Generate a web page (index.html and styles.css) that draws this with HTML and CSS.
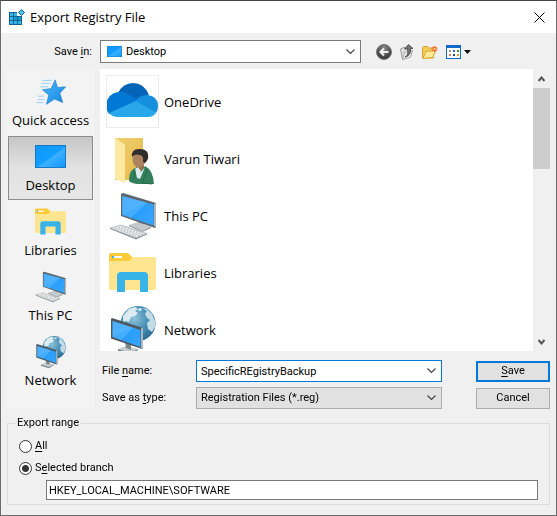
FILE: index.html
```html
<!DOCTYPE html>
<html lang="en">
<head>
    <meta charset="UTF-8">
    <meta name="viewport" content="width=device-width, initial-scale=1.0">
    <title>Export Registry File</title>
    <link rel="stylesheet" href="styles.css">
</head>
<body>
    <svg class="sprites" aria-hidden="true">
        <defs>
            <linearGradient id="screen" x1="0" y1="0" x2="1" y2="1">
                <stop offset="0" stop-color="#3aa5fb"/>
                <stop offset="0.5" stop-color="#45aeff"/>
                <stop offset="0.52" stop-color="#2b9dfb"/>
                <stop offset="1" stop-color="#37a6ff"/>
            </linearGradient>
            <linearGradient id="desk" x1="0" y1="0" x2="1" y2="1">
                <stop offset="0" stop-color="#0d98fb"/>
                <stop offset="0.5" stop-color="#129dff"/>
                <stop offset="0.56" stop-color="#3bb0ff"/>
                <stop offset="1" stop-color="#1199f8"/>
            </linearGradient>
            <radialGradient id="globe" cx="0.4" cy="0.35" r="0.7">
                <stop offset="0" stop-color="#8fc3da"/>
                <stop offset="0.5" stop-color="#4d93b8"/>
                <stop offset="1" stop-color="#276a94"/>
            </radialGradient>
            <linearGradient id="star" x1="0" y1="0" x2="1" y2="1">
                <stop offset="0" stop-color="#4fb9fb"/>
                <stop offset="1" stop-color="#1186e0"/>
            </linearGradient>
            <linearGradient id="flap" x1="0" y1="0" x2="1" y2="1">
                <stop offset="0" stop-color="#f0d070"/>
                <stop offset="1" stop-color="#e5b94c"/>
            </linearGradient>
            <radialGradient id="ball" cx="0.5" cy="0.25" r="0.8">
                <stop offset="0" stop-color="#8b8b8b"/>
                <stop offset="0.6" stop-color="#4d4d4d"/>
                <stop offset="1" stop-color="#2f2f2f"/>
            </radialGradient>
            <pattern id="keys" width="3" height="2" patternUnits="userSpaceOnUse" patternTransform="rotate(18)">
                <rect width="3" height="2" fill="#e3e6e8"/>
                <rect width="1" height="1" fill="#a3a9ad"/>
            </pattern>
        </defs>
        <symbol id="icon-pc" viewBox="0 0 53 53">
            <path d="M32 31v5l5 2 1-6z" fill="#7e868b"/>
            <path d="M23 36l9-3 13 5-9 4z" fill="#c3c9cd"/>
            <path d="M23 36l13 6 9-4v1l-9 4-13-6z" fill="#7d868c"/>
            <path d="M15 5l2-1 33 10v24l-1 1-34-12z" fill="#5c666d"/>
            <path d="M16.300 7l31.400 8.500v21L16.300 26z" fill="url(#screen)"/>
            <path d="M48 15l2-1v24l-2-1z" fill="#aeb8be"/>
            <path d="M16.300 26V7L40 13.500z" fill="#6cc0ff" opacity=".35"/>
            <path d="M4 39l11-3 26 8.500-11 4.500z" fill="url(#keys)" stroke="#b4babd" stroke-width=".8"/>
            <path d="M4 39l26 10 11-4.500v1L30 50.500 4 40z" fill="#8e969b"/>
        </symbol>
        <symbol id="icon-libraries" viewBox="0 0 53 53">
            <path d="M3 9q0-2 2-2h17l5 5v4H3z" fill="#fdcb3a"/>
            <path d="M3 15h20l4-4h21q2 0 2 2v29q0 2-2 2H5q-2 0-2-2z" fill="#ffe590"/>
            <rect x="6" y="10" width="10" height="2" fill="#fff"/>
            <rect x="6" y="10" width="2" height="2" fill="#36b2ea"/>
            <path d="M11 46V30q0-4 4-4h23q4 0 4 4v16h-8V34H19v12z" fill="#38b3e8"/>
        </symbol>
        <symbol id="icon-network" viewBox="0 0 53 53">
            <circle cx="32" cy="20.500" r="17.500" fill="url(#globe)"/>
            <path d="M17 13l6-7 6-2 3 2-3 2 3 2-3 3-4 1-2 5-3-1-3 1z" fill="#dcebf0"/>
            <path d="M36 5l5 1 5 5 3 7v6l-3 5-4-3-1-6 3-3-3-2-2-4 2-3z" fill="#c2dde7"/>
            <path d="M32 6l3-1 1 2-3 1z" fill="#e8f3f6"/>
            <path d="M12 46l8-3 12 3-8 5z" fill="#c6ccd0"/>
            <path d="M12 46l12 4 8-4v1l-8 5-12-4z" fill="#78838a"/>
            <path d="M19 39l6 2v6l-5-2z" fill="#7c868c"/>
            <path d="M5 16l1-1 31 10v20l-1 1L5 35.500z" fill="#4c5961"/>
            <path d="M6.500 18L34.500 27v17L6.500 34z" fill="url(#screen)"/>
            <path d="M35 25l2 0v20l-2 1z" fill="#a8b7c0"/>
            <path d="M6.500 34V18l20 6.500z" fill="#6cc0ff" opacity=".35"/>
        </symbol>
        <symbol id="icon-desktop" viewBox="0 0 31 23" preserveAspectRatio="none">
            <rect width="31" height="23" fill="#1679c4"/>
            <rect x="1" y="1" width="29" height="21" fill="url(#desk)"/>
        </symbol>
        <symbol id="icon-chevron" viewBox="0 0 9 6">
            <path d="M.5 .5l4 4 4-4" fill="none" stroke="#444" stroke-width="1.200"/>
        </symbol>
    </svg>

    <div class="dialog">
        <header class="titlebar">
            <svg class="app-icon" viewBox="0 0 16 16" aria-hidden="true">
                <path d="M0 3h8v4h5v9H0z" fill="#14628f"/>
                <path d="M1 4h3v3H1zM5 4h3v3H5zM1 8h3v3H1zM5 8h3v3H5zM9 8h3v3H9zM1 12h3v3H1zM5 12h3v3H5zM9 12h3v3H9z" fill="#35b6ea"/>
                <path d="M5 8h3v3H5zM9 8h3v3H9z" fill="#1797d8"/>
                <path d="M12.500 .5l3 3-3 3-3-3z" fill="#54c4ee" stroke="#14628f"/>
            </svg>
            <h1>Export Registry File</h1>
            <button class="close" type="button" aria-label="Close">
                <svg viewBox="0 0 11 11" width="11" height="11"><path d="M.5 .5l10 10M10.500 .5l-10 10" stroke="#000" fill="none"/></svg>
            </button>
        </header>

        <form class="dialog-body">
            <div class="lookin">
                <label for="saveIn">Save <u>i</u>n:</label>
                <div class="combo lookin-combo">
                    <svg class="combo-icon" aria-hidden="true"><use href="#icon-desktop"/></svg>
                    <select id="saveIn">
                        <option>Desktop</option>
                    </select>
                </div>
                <div class="toolbar">
                    <button type="button" aria-label="Back">
                        <svg viewBox="0 0 16 16" width="16" height="16">
                            <circle cx="8" cy="8" r="7.500" fill="url(#ball)" stroke="#777"/>
                            <path d="M12.500 8H4.500M8 4.500L4.500 8 8 11.500" fill="none" stroke="#f2f2f2" stroke-width="2"/>
                        </svg>
                    </button>
                    <button type="button" aria-label="Up one level">
                        <svg viewBox="0 0 16 16" width="16" height="16">
                            <path d="M1.500 5l4-2 1 1.500 5-1.500v9l-8 3.500z" fill="#dedede" stroke="#979797"/>
                            <path d="M3.500 15.500l2-7 8-2-2 6.500z" fill="#efefef" stroke="#a5a5a5"/>
                            <path d="M6 13q4-2 2.500-8H5.500L9.500 .5l4.500 4h-2.500q1 7-5.500 8.500z" fill="#737373" stroke="#444" stroke-width=".8"/>
                        </svg>
                    </button>
                    <button type="button" aria-label="Create new folder">
                        <svg viewBox="0 0 16 16" width="16" height="16">
                            <path d="M.5 14V3.500l1-1h4l1 1.500h5V14z" fill="#f3ca56" stroke="#d5a233"/>
                            <path d="M1 14.500l3-7 9.500-1-2.500 7z" fill="#ffe896" stroke="#dba939"/>
                            <path d="M12.500 2v6M9.500 5h6M10.500 3l4 4M14.500 3l-4 4" stroke="#f4602a" stroke-width="1.200"/>
                            <circle cx="12.500" cy="5" r="1.200" fill="#ffd27a"/>
                        </svg>
                    </button>
                    <button type="button" class="view" aria-label="View menu">
                        <svg viewBox="0 0 26 14" width="26" height="14">
                            <rect x=".5" y=".5" width="14" height="13" fill="#fff" stroke="#0b69c7"/>
                            <rect width="15" height="3" fill="#0b69c7"/>
                            <path d="M3 5h2v2H3z" fill="#999"/>
                            <path d="M7 5h2v2H7z" fill="#2a6fc9"/>
                            <path d="M11 5h2v2h-2z" fill="#2d9b2d"/>
                            <path d="M3 9h2v2H3z" fill="#f07a4a"/>
                            <path d="M7 9h2v2H7z" fill="#1e3f9c"/>
                            <path d="M11 9h2v2h-2z" fill="#d8a21b"/>
                            <path d="M18 5h7l-3.500 4z" fill="#111"/>
                        </svg>
                    </button>
                </div>
            </div>

            <div class="main">
                <nav class="places">
                    <button type="button">
                        <svg viewBox="-3 -6 60 60" aria-hidden="true">
                            <path d="M13 5h16M11 10h15M9 16h14M5 38h12M3 43h12M5 32h12" stroke="#8accf5" stroke-width="1.500"/>
                            <path d="M35 4l4 13 14-1-10 11 5 16-14-6-14 9 4-16-11-9 15-2z" fill="url(#star)" stroke="#1378c7"/>
                        </svg>
                        <span>Quick access</span>
                    </button>
                    <button type="button" class="selected">
                        <svg class="desktop-icon" aria-hidden="true"><use href="#icon-desktop"/></svg>
                        <span>Desktop</span>
                    </button>
                    <button type="button">
                        <svg aria-hidden="true"><use href="#icon-libraries"/></svg>
                        <span>Libraries</span>
                    </button>
                    <button type="button">
                        <svg aria-hidden="true"><use href="#icon-pc"/></svg>
                        <span>This PC</span>
                    </button>
                    <button type="button">
                        <svg aria-hidden="true"><use href="#icon-network"/></svg>
                        <span>Network</span>
                    </button>
                </nav>

                <div class="content">
                    <div class="browser">
                        <ul class="files">
                            <li>
                                <svg class="framed" viewBox="0 0 53 53" aria-hidden="true">
                                    <path d="M12 18Q17 8 27 8q11 0 16 12l-9 9z" fill="#0364b8"/>
                                    <path d="M12 17q5-1 10 2l12 7-31 13q-3-4-3-9 1-11 12-13z" fill="#0078d4"/>
                                    <path d="M31 24q4-4 10-4 11 1 11 11 0 4-2 7l-21-11z" fill="#1490df"/>
                                    <path d="M3 38l27-12 20 12q-3 4-8 4H12q-6 0-9-4z" fill="#28a8ea"/>
                                </svg>
                                <span>OneDrive</span>
                            </li>
                            <li>
                                <svg viewBox="0 0 53 53" aria-hidden="true">
                                    <path d="M9 6h28v42H9z" fill="url(#flap)"/>
                                    <path d="M9 6l10 7v38L9 47z" fill="#ffe9a2"/>
                                    <path d="M30 29h8v9h-8z" fill="#98704f"/>
                                    <path d="M23 49q0-12 8-14l3 5 5-6q8 4 9 18H31q-6-1-8-3z" fill="#34805c"/>
                                    <path d="M29 37l3-2 3 5 4-5-5 12-3-1z" fill="#dcebed"/>
                                    <path d="M39 35l2 5-5 11 10 1M29 38l-1 9" fill="none" stroke="#236547" stroke-width=".8"/>
                                    <ellipse cx="33" cy="27.500" rx="6.500" ry="8" fill="#ad8260"/>
                                    <path d="M26 25q-1-8 7-8t9 5q1 6-3 9l-2-1q1-6-3-7-3-1-6 0z" fill="#302d2d"/>
                                </svg>
                                <span>Varun Tiwari</span>
                            </li>
                            <li>
                                <svg aria-hidden="true"><use href="#icon-pc"/></svg>
                                <span>This PC</span>
                            </li>
                            <li>
                                <svg aria-hidden="true"><use href="#icon-libraries"/></svg>
                                <span>Libraries</span>
                            </li>
                            <li>
                                <svg aria-hidden="true"><use href="#icon-network"/></svg>
                                <span>Network</span>
                            </li>
                        </ul>
                        <div class="scrollbar">
                            <button type="button" aria-label="Scroll up">
                                <svg viewBox="0 0 7 6" width="7" height="6"><path d="M.5 5l3-3.500 3 3.500" fill="none" stroke="#555" stroke-width="2"/></svg>
                            </button>
                            <div class="track"><div class="thumb"></div></div>
                            <button type="button" aria-label="Scroll down">
                                <svg viewBox="0 0 7 6" width="7" height="6"><path d="M.5 1l3 3.500 3-3.500" fill="none" stroke="#555" stroke-width="2"/></svg>
                            </button>
                        </div>
                    </div>

                    <div class="fields">
                        <label for="fileName">File <u>n</u>ame:</label>
                        <div class="combo focused">
                            <input type="text" id="fileName" value="SpecificREgistryBackup" autofocus>
                            <button type="button" class="drop" aria-label="Previous names">
                                <svg width="9" height="6"><use href="#icon-chevron"/></svg>
                            </button>
                        </div>
                        <button type="submit" class="btn primary"><u>S</u>ave</button>

                        <label for="fileType">Save as <u>t</u>ype:</label>
                        <div class="combo grey">
                            <select id="fileType">
                                <option>Registration Files (*.reg)</option>
                            </select>
                        </div>
                        <button type="button" class="btn">Cancel</button>
                    </div>
                </div>
            </div>

            <fieldset class="range">
                <legend>Export range</legend>
                <label><input type="radio" name="range"><span><u>A</u>ll</span></label>
                <label><input type="radio" name="range" checked><span>S<u>e</u>lected branch</span></label>
                <input type="text" class="branch" aria-label="Selected branch" value="HKEY_LOCAL_MACHINE\SOFTWARE">
            </fieldset>
        </form>
    </div>

    <script>
        // put the caret after the suggested name
        const fileName = document.getElementById('fileName');
        fileName.focus();
        fileName.setSelectionRange(fileName.value.length, fileName.value.length);
    </script>
</body>
</html>
```

FILE: styles.css
```css
* {
    box-sizing: border-box;
}
body {
    margin: 0;
    font-family: Roboto, "Liberation Sans", sans-serif;
    font-size: 11px;
    line-height: 14px;
    color: #000;
}
button, input, select {
    font: inherit;
    color: inherit;
    margin: 0;
    padding: 0;
    border: none;
    background: none;
    border-radius: 0;
}
u {
    text-underline-offset: 2px;
}
svg {
    display: block;
    flex: none;
}
.sprites {
    position: absolute;
    width: 0;
    height: 0;
}
.dialog {
    display: flex;
    flex-direction: column;
    min-height: 100vh;
    border: 1px solid #6b6b6b;
    border-top-color: #444;
    background: #f0f0f0;
}

/* title bar */
.titlebar {
    display: flex;
    align-items: center;
    height: 32px;
    padding-left: 8px;
    background: #fff;
}
.app-icon {
    width: 16px;
    height: 16px;
}
.titlebar h1 {
    flex: 1;
    margin: 0 0 0 5px;
    font: 13px/18px "Open Sans", sans-serif;
}
.close {
    display: flex;
    align-items: center;
    justify-content: center;
    width: 34px;
    height: 32px;
}

.dialog-body {
    flex: 1;
    display: flex;
    flex-direction: column;
    padding: 7px 6px 10px;
}

/* save in */
.lookin {
    display: flex;
    align-items: center;
    padding-right: 78px;
}
.lookin > label {
    width: 93px;
    padding-right: 8px;
    text-align: right;
}
.combo {
    display: flex;
    align-items: center;
    min-width: 0;
    border: 1px solid #7a7a7a;
    background: #fff;
}
.combo select, .combo input {
    flex: 1;
    min-width: 0;
    height: 100%;
    padding-left: 4px;
    outline: none;
}
.combo select {
    appearance: none;
    background: url("data:image/svg+xml,%3Csvg xmlns='http://www.w3.org/2000/svg' width='9' height='6'%3E%3Cpath d='M.5 .5l4 4 4-4' fill='none' stroke='%23444' stroke-width='1.2'/%3E%3C/svg%3E") no-repeat right 5px center;
}
.lookin-combo {
    flex: 1;
    height: 23px;
    padding-left: 6px;
}
.combo-icon {
    width: 15px;
    height: 11px;
}
.toolbar {
    display: flex;
    align-items: center;
    gap: 7px;
    margin-left: 15px;
}
.toolbar .view {
    margin-left: 1px;
}

/* places, file list and fields */
.main {
    flex: 1;
    display: flex;
    gap: 6px;
    margin-top: 6px;
}
.places {
    display: flex;
    flex-direction: column;
    gap: 1px;
    width: 87px;
    padding: 2px 1px;
    background: #f3f3f3;
}
.places button {
    display: flex;
    flex-direction: column;
    align-items: center;
    justify-content: flex-end;
    gap: 2px;
    height: 64px;
    padding-bottom: 5px;
    border: 1px solid transparent;
    font: 13px/18px "Open Sans", sans-serif;
}
.places svg {
    width: 35px;
    height: 35px;
}
.places .desktop-icon {
    width: 31px;
    height: 23px;
    margin-bottom: 6px;
}
.places .selected {
    border: 1px solid #8c8c8c;
    background: linear-gradient(#c6c6c6, #e2e2e2 50%, #e6e6e6);
}
.content {
    flex: 1;
    display: flex;
    flex-direction: column;
    min-width: 0;
}
.browser {
    flex: 1 1 0;
    display: flex;
    min-height: 0;
    background: #fff;
}
.files {
    flex: 1;
    margin: 0;
    padding: 6px;
    overflow: hidden;
    list-style: none;
}
.files li {
    display: flex;
    align-items: center;
    gap: 5px;
    margin-bottom: 4px;
    font: 13px/18px "Open Sans", sans-serif;
}
.files svg {
    width: 53px;
    height: 53px;
}
.files .framed {
    outline: 1px solid #ececec;
    outline-offset: -1px;
}
.scrollbar {
    display: flex;
    flex-direction: column;
    width: 17px;
    background: #f0f0f0;
}
.scrollbar button {
    display: flex;
    align-items: center;
    justify-content: center;
    height: 19px;
}
.track {
    flex: 1;
}
.thumb {
    height: 81px;
    background: #cdcdcd;
}
.fields {
    display: grid;
    grid-template-columns: 96px 1fr 74px;
    grid-auto-rows: 22px;
    align-items: center;
    row-gap: 5px;
    padding-top: 9px;
}
.fields > label {
    padding-left: 2px;
}
.fields .combo {
    height: 22px;
    margin-right: 34px;
}
.fields .focused {
    border-color: #0078d7;
}
.fields .grey {
    border-color: #adadad;
    background: #e1e1e1;
}
.drop {
    height: 100%;
    padding: 0 5px;
}
.btn {
    height: 21px;
    border: 1px solid #adadad;
    background: #e1e1e1;
    text-align: center;
}
.primary {
    border: 2px solid #0078d7;
}

/* export range */
.range {
    display: flex;
    flex-direction: column;
    gap: 2px;
    min-width: 0;
    margin: 7px 0 0;
    padding: 6px 11px 4px;
    border: 1px solid #dcdcdc;
}
.range legend {
    margin-left: -4px;
    padding: 0 2px;
}
.range label {
    display: flex;
    align-items: center;
    gap: 3px;
    height: 20px;
}
.range input[type="radio"] {
    appearance: none;
    width: 13px;
    height: 13px;
    border: 1px solid #333;
    border-radius: 50%;
    background: #fff;
}
.range input[type="radio"]:checked {
    background: radial-gradient(circle, #333 3px, #fff 4px);
}
.branch {
    height: 20px;
    margin-left: 27px;
    padding-left: 2px;
    border: 1px solid #7a7a7a;
    background: #fff;
}
```
